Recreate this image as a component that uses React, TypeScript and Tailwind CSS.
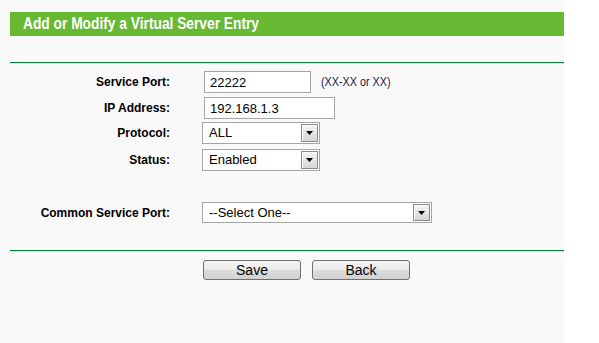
import { ChangeEvent, useState } from "react";

const font = { fontFamily: '"Liberation Sans", Arial, sans-serif' };

const Arrow = () => (
  <span className="flex h-full w-[17px] shrink-0 items-center justify-center border border-[#8a8a8a] bg-gradient-to-b from-[#f4f4f4] to-[#d6d6d6] shadow-[inset_1px_1px_0_#ffffff]">
    <svg width="7" height="4" viewBox="0 0 7 4">
      <path d="M0 0h7L3.5 4z" fill="#000" />
    </svg>
  </span>
);

const Select = ({ value, width, height = 22 }: { value: string; width: number; height?: number }) => (
  <div
    className="flex items-stretch border border-[#a5a5a5] bg-white p-[1px]"
    style={{ width, height }}
  >
    <span className="flex flex-1 items-center pl-[5px] text-[13px] text-black">{value}</span>
    <Arrow />
  </div>
);

const Row = ({ label, children, className }: { label: string; children: React.ReactNode; className: string }) => (
  <div className={`flex items-center ${className}`}>
    <div className="w-[170px] shrink-0 text-right text-[12px] font-bold text-black">{label}</div>
    <div className="ml-[32px] flex items-center">{children}</div>
  </div>
);

export default function App() {
  const [port, setPort] = useState("22222");
  const [ip, setIp] = useState("192.168.1.3");

  return (
    <div className="flex h-[343px] w-[599px] bg-white" style={font}>
      <div className="h-full w-[564px] bg-[#f9f9f9]">
        <div className="ml-[10px] mt-[12px] flex h-[24px] items-center bg-[#67b934] pl-[13px]">
          <span className="inline-block origin-left scale-x-[0.86] whitespace-nowrap text-[16px] font-bold text-white">
            Add or Modify a Virtual Server Entry
          </span>
        </div>

        <div className="ml-[10px] mt-[26px] border-t border-[#0b7a3c] border-b-[#cfe6d4] border-b" />

        <Row label="Service Port:" className="mt-[7px] h-[22px]">
          <input
            value={port}
            onChange={(e: ChangeEvent<HTMLInputElement>) => setPort(e.target.value)}
            className="ml-[2px] h-[22px] w-[107px] border border-[#a5a5a5] bg-white px-[5px] text-[13px] text-black outline-none"
          />
          <span className="ml-[10px] inline-block origin-left scale-x-[0.9] whitespace-nowrap text-[12px] text-[#1c1c4a]">
            (XX-XX or XX)
          </span>
        </Row>

        <Row label="IP Address:" className="mt-[4px] h-[22px]">
          <input
            value={ip}
            onChange={(e: ChangeEvent<HTMLInputElement>) => setIp(e.target.value)}
            className="ml-[2px] h-[22px] w-[131px] border border-[#a5a5a5] bg-white px-[5px] text-[13px] text-black outline-none"
          />
        </Row>

        <Row label="Protocol:" className="mt-[3px] h-[22px]">
          <Select value="ALL" width={118} />
        </Row>

        <Row label="Status:" className="mt-[5px] h-[22px]">
          <Select value="Enabled" width={118} />
        </Row>

        <Row label="Common Service Port:" className="mt-[31px] h-[21px]">
          <Select value="--Select One--" width={230} height={21} />
        </Row>

        <div className="ml-[10px] mt-[27px] border-t border-[#0b7a3c] border-b-[#cfe6d4] border-b" />

        <div className="ml-[203px] mt-[8px] flex gap-[11px]">
          <button className="h-[20px] w-[98px] rounded-[3px] border border-[#707070] bg-[linear-gradient(#f3f3f3_0%,#ebebeb_50%,#dcdcdc_50%,#d2d2d2_100%)] text-[14px] leading-none text-black">
            Save
          </button>
          <button className="h-[20px] w-[98px] rounded-[3px] border border-[#707070] bg-[linear-gradient(#f3f3f3_0%,#ebebeb_50%,#dcdcdc_50%,#d2d2d2_100%)] text-[14px] leading-none text-black">
            Back
          </button>
        </div>
      </div>
    </div>
  );
}
